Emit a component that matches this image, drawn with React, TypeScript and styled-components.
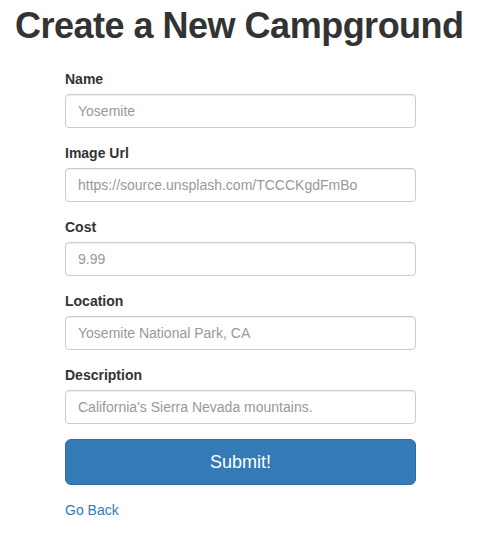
import React from "react";
import styled, { createGlobalStyle } from "styled-components";

const GlobalStyle = createGlobalStyle`
  * { box-sizing: border-box; }
  html, body { margin: 0; padding: 0; background: #fff; }
  body {
    font-family: "Liberation Sans", Arial, Helvetica, sans-serif;
    font-size: 14px;
    line-height: 1.42857143;
    color: #333;
  }
`;

const Container = styled.div`
  padding: 0 15px;
`;

const Title = styled.h1`
  font-family: "Liberation Sans", Arial, Helvetica, sans-serif;
  font-size: 36px;
  font-weight: 700;
  letter-spacing: -0.5px;
  line-height: 1.1;
  color: #333;
  margin: 6px 0 23px;
`;

const FormWrap = styled.div`
  width: 351px;
  margin-left: 50px;
`;

const Form = styled.form`
  display: flex;
  flex-direction: column;
`;

const Group = styled.div`
  display: flex;
  flex-direction: column;
  margin-bottom: 15px;
`;

const Label = styled.label`
  font-weight: 700;
  font-size: 14px;
  line-height: 20px;
  margin-bottom: 5px;
`;

const Input = styled.input`
  display: block;
  width: 100%;
  height: 34px;
  padding: 6px 12px;
  font-family: inherit;
  font-size: 14px;
  line-height: 1.42857143;
  color: #555;
  background: #fff;
  border: 1px solid #ccc;
  border-radius: 4px;
  box-shadow: inset 0 1px 1px rgba(0, 0, 0, 0.075);
  outline: none;
  &::placeholder { color: #999; opacity: 1; }
`;

const SubmitButton = styled.button`
  display: block;
  width: 100%;
  height: 46px;
  padding: 10px 16px;
  font-family: inherit;
  font-size: 18px;
  line-height: 1.3333333;
  color: #fff;
  background: #337ab7;
  border: 1px solid #2e6da4;
  border-radius: 6px;
  cursor: pointer;
`;

const BackLink = styled.a`
  display: inline-block;
  color: #337ab7;
  text-decoration: none;
  font-size: 14px;
  line-height: 20px;
`;

const fields = [
  { label: "Name", placeholder: "Yosemite" },
  { label: "Image Url", placeholder: "https://source.unsplash.com/TCCCKgdFmBo" },
  { label: "Cost", placeholder: "9.99" },
  { label: "Location", placeholder: "Yosemite National Park, CA" },
  { label: "Description", placeholder: "California's Sierra Nevada mountains." },
];

export default function App() {
  return (
    <>
      <GlobalStyle />
      <Container>
        <Title>Create a New Campground</Title>
        <FormWrap>
          <Form onSubmit={(e) => e.preventDefault()}>
            {fields.map((f) => (
              <Group key={f.label}>
                <Label>{f.label}</Label>
                <Input type="text" placeholder={f.placeholder} />
              </Group>
            ))}
            <Group>
              <SubmitButton type="submit">Submit!</SubmitButton>
            </Group>
          </Form>
          <BackLink href="#">Go Back</BackLink>
        </FormWrap>
      </Container>
    </>
  );
}
